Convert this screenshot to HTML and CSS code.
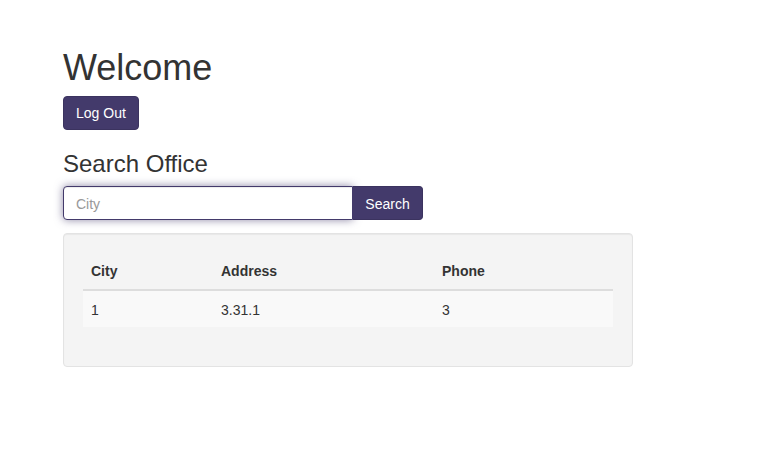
FILE: index.html
```html
<!DOCTYPE html>
<html>
<head>
<meta charset="utf-8">
<link rel="stylesheet" href="styles.css">
</head>
<body>
<div class="page">
  <h1 class="title">Welcome</h1>
  <button class="btn">Log Out</button>
  <h3 class="subtitle">Search Office</h3>
  <div class="input-group">
    <input class="field" type="text" placeholder="City">
    <button class="btn btn-addon">Search</button>
  </div>
  <div class="well">
    <table class="table">
      <thead>
        <tr><th class="c1">City</th><th class="c2">Address</th><th class="c3">Phone</th></tr>
      </thead>
      <tbody>
        <tr><td>1</td><td>3.31.1</td><td>3</td></tr>
      </tbody>
    </table>
  </div>
</div>
</body>
</html>
```
FILE: styles.css
```css
* { box-sizing: border-box; }
html, body { margin: 0; padding: 0; background: #fff; }
body {
  font-family: "Liberation Sans", Arial, Helvetica, sans-serif;
  font-size: 14px;
  line-height: 20px;
  color: #333;
}
.page {
  padding: 48px 0 0 63px;
  width: 633px;
  display: flex;
  flex-direction: column;
  align-items: flex-start;
}
.title {
  font-size: 36px;
  font-weight: 500;
  line-height: 40px;
  margin: 0 0 8px;
}
.btn {
  font-family: inherit;
  font-size: 14px;
  line-height: 20px;
  padding: 6px 12px;
  color: #fff;
  background: #433a6b;
  border: 1px solid #3b335f;
  border-radius: 4px;
  height: 34px;
  cursor: pointer;
}
.subtitle {
  font-size: 24px;
  font-weight: 500;
  line-height: 26px;
  margin: 21px 0 9px;
}
.input-group {
  display: flex;
  width: 360px;
}
.field {
  width: 290px;
  height: 34px;
  padding: 7px 12px 5px;
  font-family: inherit;
  font-size: 14px;
  color: #555;
  border: 1px solid #433a6b;
  border-radius: 4px 0 0 4px;
  box-shadow: inset 0 1px 1px rgba(0,0,0,.075), 0 0 8px rgba(67,58,107,.6);
  outline: none;
}
.field::placeholder { color: #999; }
.btn-addon {
  width: 70px;
  border-radius: 0 4px 4px 0;
  border-left: 0;
  padding-top: 7px;
}
.well {
  margin-top: 13px;
  width: 570px;
  padding: 19px;
  background: #f4f4f4;
  border: 1px solid #e3e3e3;
  border-radius: 4px;
  box-shadow: inset 0 1px 1px rgba(0,0,0,.05);
}
.table {
  width: 530px;
  border-collapse: collapse;
  border-spacing: 0;
  margin-bottom: 20px;
}
.table th, .table td {
  padding: 8px;
  text-align: left;
  line-height: 20px;
  vertical-align: bottom;
}
.table th {
  font-weight: bold;
  border-bottom: 2px solid #ddd;
}
.table td { vertical-align: top; padding-top: 9px; padding-bottom: 7px; }
.table tbody tr { background: #f9f9f9; }
.c1 { width: 130px; }
.c2 { width: 221px; }
.c3 { width: 179px; }
```
